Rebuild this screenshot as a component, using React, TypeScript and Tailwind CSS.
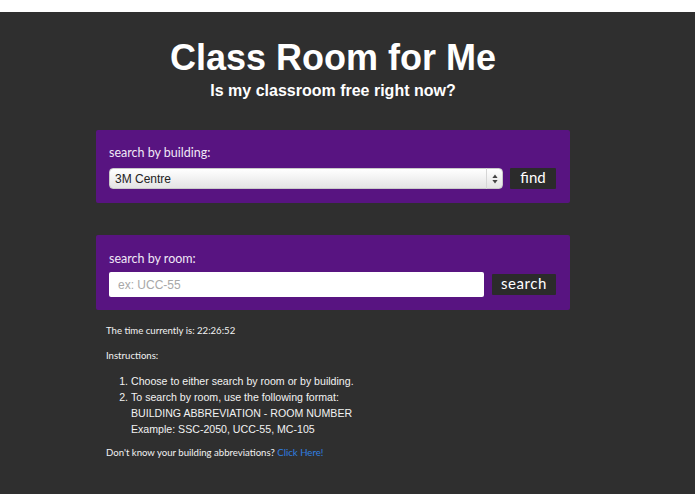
import React from 'react';

const AVENIR = "font-['Lato',sans-serif]";
const HELV = "font-['Liberation_Sans',Arial,sans-serif]";

function UpDown() {
  return (
    <svg width="6" height="10" viewBox="0 0 6 10" className="text-[#444]">
      <path d="M3 0.5 L5.6 4 H0.4 Z" fill="currentColor" />
      <path d="M3 9.5 L5.6 6 H0.4 Z" fill="currentColor" />
    </svg>
  );
}

export default function App() {
  return (
    <div className="min-h-[494px] bg-white pt-[12px]">
      <div className="min-h-[482px] bg-[#2f2f2f] text-white">
        <div className="w-[666px] flex flex-col items-center pt-[28px] pb-6">
          <h1 className={`${HELV} text-[36px] font-bold leading-[36px]`}>Class Room for Me</h1>
          <h2 className={`${HELV} text-[16px] font-bold leading-[18px] mt-[6px]`}>Is my classroom free right now?</h2>

          <div className="w-[474px] mt-[30px] flex flex-col gap-[32px]">
            <div className="bg-[#581481] rounded-[2px] px-[13px] pt-[16px] pb-[14px]">
              <div className={`${AVENIR} text-[12.5px] leading-[13px] text-[#f0e8f6]`}>search by building:</div>
              <div className="flex items-center gap-[7px] mt-[9px]">
                <div className="relative w-[394px] h-[21px]">
                  <select
                    defaultValue="3M Centre"
                    className={`${HELV} block appearance-none w-full h-[21px] rounded-[4px] bg-gradient-to-b from-[#ffffff] to-[#e4e4e4] border border-[#c9c9c9] pl-[5px] text-[12px] text-[#222] outline-none`}
                  >
                    <option>3M Centre</option>
                    <option>Arts Lecture Hall</option>
                    <option>Dana Porter Library</option>
                  </select>
                  <div className="pointer-events-none absolute right-0 top-0 h-full w-[17px] flex items-center justify-center border-l border-[#d6d6d6]">
                    <UpDown />
                  </div>
                </div>
                <button className={`${AVENIR} w-[46px] h-[21px] bg-[#2b2b2b] text-white text-[15px] leading-[15px] rounded-[1px] pb-[2px]`}>find</button>
              </div>
            </div>

            <div className="bg-[#581481] rounded-[2px] px-[13px] pt-[17px] pb-[13px]">
              <div className={`${AVENIR} text-[12.5px] leading-[13px] text-[#f0e8f6]`}>search by room:</div>
              <div className="flex items-center gap-[8px] mt-[7px]">
                <input
                  placeholder="ex: UCC-55"
                  className={`${HELV} w-[375px] h-[25px] rounded-[2px] bg-white px-[9px] text-[12px] text-[#222] placeholder:text-[#a8a8a8] outline-none`}
                />
                <button className={`${AVENIR} w-[64px] h-[21px] bg-[#2b2b2b] text-white text-[15px] leading-[15px] tracking-[0.6px] rounded-[1px] pb-[2px]`}>search</button>
              </div>
            </div>

            <div className="-mt-[18px] pl-[10px] text-[#f2f2f2]">
              <p className={`${AVENIR} text-[9.6px] leading-[14px]`}>The time currently is: 22:26:52</p>
              <p className={`${AVENIR} text-[9.6px] leading-[14px] mt-[11px]`}>Instructions:</p>
              <ol className={`${HELV} list-decimal pl-[25px] mt-[10px] text-[10.6px] leading-[16px]`}>
                <li>Choose to either search by room or by building.</li>
                <li>
                  To search by room, use the following format:
                  <br />BUILDING ABBREVIATION - ROOM NUMBER
                  <br />Example: SSC-2050, UCC-55, MC-105
                </li>
              </ol>
              <p className={`${AVENIR} text-[9.6px] leading-[14px] mt-[9px]`}>
                Don't know your building abbreviations?{' '}
                <a href="#" className="text-[#2f7fe0]">Click Here!</a>
              </p>
            </div>
          </div>
        </div>
      </div>
    </div>
  );
}
